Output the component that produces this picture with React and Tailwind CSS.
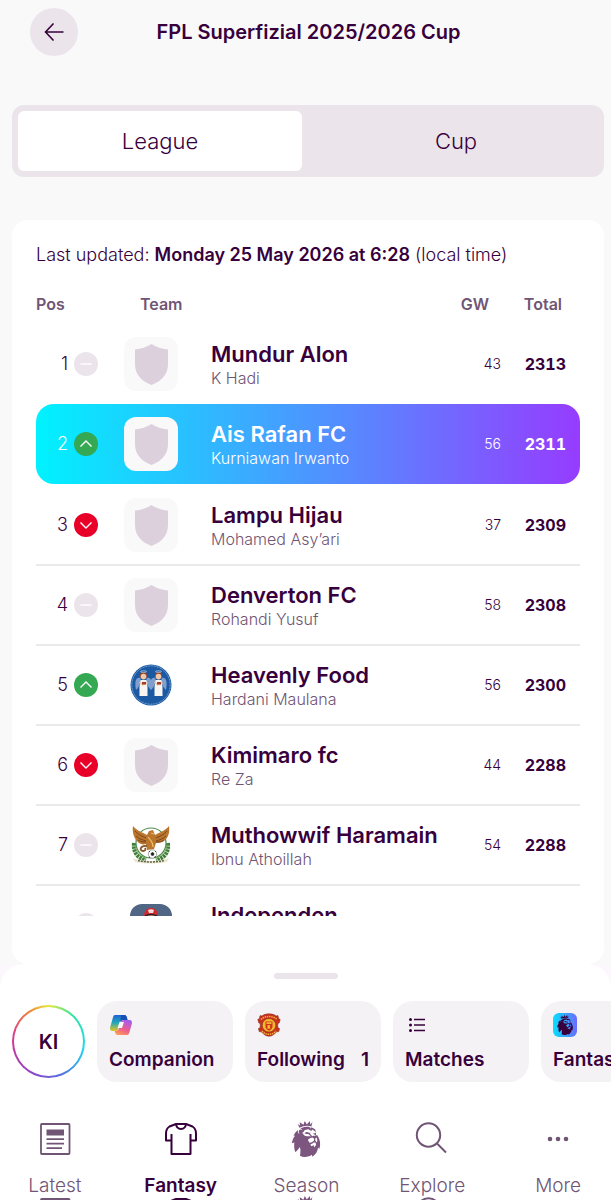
import { SiPremierleague } from 'react-icons/si';

const STANDINGS = [
  { pos: 1, move: 'same', team: 'Mundur Alon', manager: 'K Hadi', gw: 43, total: 2313 },
  { pos: 2, move: 'up', team: 'Ais Rafan FC', manager: 'Kurniawan Irwanto', gw: 56, total: 2311, mine: true },
  { pos: 3, move: 'down', team: 'Lampu Hijau', manager: 'Mohamed Asy’ari', gw: 37, total: 2309 },
  { pos: 4, move: 'same', team: 'Denverton FC', manager: 'Rohandi Yusuf', gw: 58, total: 2308 },
  { pos: 5, move: 'up', team: 'Heavenly Food', manager: 'Hardani Maulana', gw: 56, total: 2300, badge: 'angels' },
  { pos: 6, move: 'down', team: 'Kimimaro fc', manager: 'Re Za', gw: 44, total: 2288 },
  { pos: 7, move: 'same', team: 'Muthowwif Haramain', manager: 'Ibnu Athoillah', gw: 54, total: 2288, badge: 'garuda' },
  { pos: 8, move: 'same', team: 'Independen', badge: 'captain' },
];

const COLS = 'grid grid-cols-[88px_87px_1fr_48px_65px] pr-3.5';

const MOVES = {
  same: { bg: 'bg-[#ebe5eb]', d: 'M6.5 12h11', label: 'No change' },
  up: { bg: 'bg-[#34a853]', d: 'M6.5 14.5 12 9l5.5 5.5', label: 'Up' },
  down: { bg: 'bg-[#e90029]', d: 'M6.5 9.5 12 15l5.5-5.5', label: 'Down' },
};

function Move({ type }) {
  const { bg, d, label } = MOVES[type];
  return (
    <span className={`size-6 shrink-0 rounded-full ${bg}`}>
      <svg viewBox="0 0 24 24" className="size-6" fill="none" stroke="#fff" strokeWidth="1.4" aria-label={label}>
        <path d={d} />
      </svg>
    </span>
  );
}

function ShieldBadge() {
  return (
    <span className="flex size-[54px] items-center justify-center rounded-xl bg-[#f9f9f9]">
      <svg viewBox="0 0 33 41" className="h-[41px] w-[33px]">
        <path d="M16.5 0C21 3 27 5 33 5.500V20c0 10-6 17-16.500 21C6 37 0 30 0 20V5.500C6 5 12 3 16.500 0Z" fill="#dcd0dc" />
      </svg>
    </span>
  );
}

function Angel({ x }) {
  return (
    <g transform={`translate(${x} 0)`}>
      <path d="M-3 14c-5-1-6 4-4.500 12 2-2 3.500-4 4.500-8ZM3 14c5-1 6 4 4.500 12-2-2-3.500-4-4.500-8Z" fill="#7f9fcc" />
      <path d="M-3 16h6l1 7v9h-8v-9Z" fill="#f7f5f2" />
      <circle cx="0" cy="11.500" r="3.600" fill="#8f452c" />
      <circle cx="0" cy="12.600" r="2.800" fill="#f2c9a8" />
      <ellipse cx="0" cy="7.600" rx="3" ry=".8" fill="none" stroke="#c9d5e6" strokeWidth=".7" />
      <path d="M-4 18l3 3 5-2" fill="none" stroke="#efc6a5" strokeWidth="1.400" />
      <path d="M-1.500 18h4v2.500h-4z" fill="#a63d2a" />
    </g>
  );
}

function AngelsBadge() {
  return (
    <svg viewBox="0 0 42 42" className="size-[42px]">
      <circle cx="21" cy="21" r="20.500" fill="#1b5aa3" />
      <circle cx="21" cy="21" r="19.200" fill="none" stroke="#8fb3dc" strokeWidth="1" strokeDasharray="1 .6" />
      <path d="M20 17l2.500 6M22 17l-2.500 6" stroke="#b9cbe2" strokeWidth="1" />
      <Angel x={13.5} />
      <Angel x={28.5} />
    </svg>
  );
}

function GarudaBadge() {
  return (
    <svg viewBox="0 0 42 42" className="size-[42px]">
      <circle cx="21" cy="19" r="15" fill="#fff" stroke="#4f8a4e" strokeWidth="1.200" />
      <path d="M4 19c-1 9 3 15 12 17M38 19c1 9-3 15-12 17" stroke="#3f7f37" strokeWidth="4" fill="none" strokeDasharray="2.500 .7" />
      <path d="M5 21c1 7 5 11 11 13M37 21c-1 7-5 11-11 13" stroke="#74a557" strokeWidth="1" fill="none" />
      <path d="M3 2c4 5 9 6 14 9l2-4 4-1 2 5c5-3 10-4 14-9 1 7-1 12-5 15-3 2-6 2-8 2l-2 6-7 1-1-6c-3 1-7 0-9-3C4 14 2 8 3 2Z" fill="#b9762c" />
      <path d="M5 7c3 4 7 5 11 7M6 12c3 3 7 4 10 5M8 16c3 2 5 2 8 2M37 7c-3 4-7 5-11 7M36 12c-3 3-7 4-10 5M34 16c-3 2-5 2-8 2" stroke="#74421b" strokeWidth=".9" fill="none" />
      <path d="M18 13c2 3 5 4 5 10M21 9l3 1" stroke="#efbd67" strokeWidth="1.200" fill="none" />
      <path d="M17 22c-7-1-8 5-4 5 2 0 3-1 2-3" stroke="#8c5525" strokeWidth="1.800" fill="none" />
      <circle cx="22.500" cy="30" r="4.200" fill="#fff" stroke="#777" strokeWidth=".6" />
      <path d="m22.500 28.500 1.500 1-.6 1.800h-1.800l-.6-1.800ZM19 28l1-1M25 27l1 1M19 33l1 .5M24 33.500l2-1" fill="#222" stroke="#222" strokeWidth=".8" />
      <path d="M3 34c9 4 27 4 36 0l-2 4c-9 2-23 2-32 0Z" fill="#eee7cf" />
      <path d="M8 36.500c8 2 18 2 26 0" stroke="#59654b" strokeWidth="1.500" strokeDasharray="2 1" fill="none" />
    </svg>
  );
}

function CaptainBadge() {
  return (
    <svg viewBox="0 0 42 42" className="size-[42px]">
      <rect width="42" height="42" rx="12" fill="#4f6684" />
      <path d="M12 42c0-12 4-18 9-18s9 6 9 18Z" fill="#22304a" />
      <circle cx="21" cy="15" r="7" fill="#d9a184" />
      <path d="M14 12c0-11 14-11 14 0-4-2-10-2-14 0Z" fill="#cf2b2e" />
      <path d="M18 6c2-1 4-1 6 0l-1 3h-4Z" fill="#f3dcdc" />
      <path d="M15 12c4-2 8-2 12 0" stroke="#2a1c25" strokeWidth="1.500" fill="none" />
    </svg>
  );
}

const BADGES = { angels: AngelsBadge, garuda: GarudaBadge, captain: CaptainBadge };

function StandingRow({ pos, move, team, manager, gw, total, badge, mine }) {
  const Badge = BADGES[badge] || ShieldBadge;
  const tone = mine
    ? 'mb-0.5 rounded-[18px] bg-linear-to-r/srgb from-[#00f2ff] to-[#963cff] text-white'
    : pos === 1
      ? 'text-[#37003c]'
      : 'border-b-2 border-[#ebe9eb] text-[#37003c]';
  return (
    <tr className={`${COLS} h-20 items-center ${tone}`}>
      <td className="flex items-center gap-1.5">
        <span className="w-8 text-right text-lg font-light">{pos}</span>
        <Move type={move} />
      </td>
      <td className="flex w-[54px] justify-center">
        <Badge />
      </td>
      <td className="min-w-0 whitespace-nowrap">
        <p className="text-[22px] leading-7 font-semibold">{team}</p>
        <p className={`h-5 text-base leading-5 font-light ${mine ? '' : 'text-[#705574]'}`}>{manager}</p>
      </td>
      <td className="text-right text-sm font-light">{gw}</td>
      <td className="text-right text-base font-bold tabular-nums">{total}</td>
    </tr>
  );
}

function CopilotLogo() {
  return (
    <svg viewBox="0 0 24 24" className="size-6">
      <defs>
        <linearGradient id="cpA" x1="0" y1="0" x2="0" y2="1">
          <stop offset="0" stopColor="#1b62d6" />
          <stop offset=".5" stopColor="#27a8b8" />
          <stop offset="1" stopColor="#e6c61c" />
        </linearGradient>
        <linearGradient id="cpB" x1=".7" y1="0" x2=".3" y2="1">
          <stop offset="0" stopColor="#a35cf0" />
          <stop offset=".6" stopColor="#ee5d8c" />
          <stop offset="1" stopColor="#fb9a5b" />
        </linearGradient>
      </defs>
      <path d="M6 2h9c2 0 2.500 1 3 3l.5 2h-4c-2 0-3 1-3.500 3l-1.500 5c-.5 2-1.500 3-3 3H4c-3 0-3.500-2-2.500-5l2-7C4.200 3.500 4.500 2 6 2Z" fill="url(#cpA)" />
      <path d="M12 2h3c2 0 2.500 1 3 3l.5 2h-4c-2 0-2.500 1-3 2Z" fill="#1a4fb5" />
      <path d="M18 22H9c-2 0-2.500-1-3-3l-.2-1c3 0 3.700-1 4.200-3l1.500-5c.5-2 1.500-3 3.500-3h5c3 0 3.500 2 2.500 5l-2 7c-.7 2-1 3-2.500 3Z" fill="url(#cpB)" />
      <path d="M10.500 9h4.500l-2 6H8.500Z" fill="#f7f4fa" />
    </svg>
  );
}

function UnitedCrest() {
  return (
    <svg viewBox="0 0 24 24" className="size-6">
      <path
        d="M12 .8c3 0 5.500.8 7 2.200l2-.4.600 3 1.600.8-1 3.600-1.400.6v4l1.800 1-.8 3-2.600.4C17.500 21.500 15 23.200 12 23.200S6.500 21.500 4.800 19l-2.600-.4-.8-3 1.800-1v-4L1.800 10l-1-3.600 1.600-.8.600-3 2 .4C6.500 1.600 9 .8 12 .8Z"
        fill="#c9301f"
        stroke="#7d2a14"
        strokeWidth=".5"
      />
      <path d="M4 6.500C7.500 2.500 16.500 2.500 20 6.500M5 18c3.500 4.500 10.500 4.500 14 0" stroke="#f3b63c" strokeWidth="1.500" strokeDasharray="1.400 .8" fill="none" />
      <circle cx="12" cy="12.300" r="6.800" fill="#f3b72c" stroke="#7d2a14" strokeWidth=".6" />
      <path d="M8.500 8.500h7v4.500c0 2.500-1.500 3.700-3.500 4.700-2-1-3.500-2.200-3.500-4.700Z" fill="#d0321f" />
      <path d="M9.500 9.300h5v1.600h-5z" fill="#f3c33c" />
      <path d="M10.500 12c2 0 1 .6 3 0l-.8 1.800 1 2.200-1.500-.8-1.600 1Z" fill="#f6c32c" />
    </svg>
  );
}

function ListIcon() {
  return (
    <svg viewBox="0 0 24 24" className="size-6" stroke="#37003c" strokeWidth="1.600">
      <path d="M9 6.500h11M9 12h11M9 17.500h11" />
      <path d="M5.500 6.500h.01M5.500 12h.01M5.500 17.500h.01" strokeWidth="3" strokeLinecap="round" />
    </svg>
  );
}

function FantasyIcon() {
  return (
    <span className="flex size-6 items-center justify-center rounded-md bg-linear-to-r/srgb from-[#05e0ff] to-[#6a6cff]">
      <SiPremierleague className="size-5 text-[#37003c]" />
    </span>
  );
}

const SHORTCUTS = [
  { label: 'Companion', Icon: CopilotLogo },
  { label: 'Following', Icon: UnitedCrest, count: 1 },
  { label: 'Matches', Icon: ListIcon },
  { label: 'Fantasy', Icon: FantasyIcon },
];

function LatestIcon() {
  return (
    <svg viewBox="0 0 36 36" className="size-9" fill="none" stroke="currentColor" strokeWidth="1.800">
      <rect x="4" y="3" width="28.500" height="30" rx=".8" />
      <path d="M9.500 8.500h17.500v6H9.500z" fill="currentColor" stroke="none" />
      <path d="M9.500 18.200H27M9.500 22.700H27M9.500 27.200H25" />
    </svg>
  );
}

function ShirtIcon() {
  return (
    <svg viewBox="0 0 36 36" className="size-9" fill="none" stroke="currentColor" strokeWidth="2" strokeLinejoin="round">
      <path d="M13 3h10l6.500 2.500c2.500 1.500 3.500 4 3.500 7v7h-5.500V33h-19V19.500H3v-7c0-3 1-5.500 3.500-7ZM8.500 13v7M27.500 13v7M13 3c.8 6.500 9.200 6.500 10 0" />
    </svg>
  );
}

function SearchIcon() {
  return (
    <svg viewBox="0 0 36 36" className="size-9" fill="none" stroke="currentColor" strokeWidth="2">
      <circle cx="14.500" cy="14" r="11.700" />
      <path d="m23 22.500 9 9" />
    </svg>
  );
}

function MoreIcon() {
  return (
    <svg viewBox="0 0 36 36" className="size-9" fill="currentColor">
      <circle cx="10" cy="18" r="2.300" />
      <circle cx="18" cy="18" r="2.300" />
      <circle cx="26" cy="18" r="2.300" />
    </svg>
  );
}

function LionIcon() {
  return <SiPremierleague className="size-9 text-[#7d5680]" />;
}

const NAV = [
  { label: 'Latest', Icon: LatestIcon },
  { label: 'Fantasy', Icon: ShirtIcon, active: true },
  { label: 'Season', Icon: LionIcon },
  { label: 'Explore', Icon: SearchIcon },
  { label: 'More', Icon: MoreIcon },
];

export default function App() {
  return (
    <div className="flex h-screen flex-col overflow-hidden bg-[#f9f9f9] font-['Inter',sans-serif] text-[#37003c]">
      <header className="mt-2 grid h-12 shrink-0 grid-cols-[48px_1fr_48px] items-center pr-6 pl-[30px]">
        <button aria-label="Back" className="flex size-12 items-center justify-center rounded-full bg-[#ebe5eb]">
          <svg viewBox="0 0 24 24" className="size-6" fill="none" stroke="currentColor" strokeWidth="1.600">
            <path d="M21.500 12H3.500M11.500 3.500 3.500 12l8 8.500" />
          </svg>
        </button>
        <h1 className="text-center text-xl font-semibold whitespace-nowrap">FPL Superfizial 2025/2026 Cup</h1>
      </header>

      <div className="mt-[49px] mr-[7px] ml-3 grid h-[72px] shrink-0 grid-cols-2 rounded-xl bg-[#ebe5eb] text-[22px] font-light">
        <button className="m-1.5 rounded-md bg-white">League</button>
        <button>Cup</button>
      </div>

      <main className="mt-[43px] mr-[7px] ml-3 flex min-h-0 flex-1 flex-col rounded-2xl bg-white px-6 pb-12">
        <p className="mt-[21px] text-lg leading-7 font-light whitespace-nowrap">
          Last updated: <strong className="font-semibold">Monday 25 May 2026 at 6:28</strong> (local time)
        </p>
        <div className="mt-6 min-h-0 flex-1 overflow-hidden">
          <table className="block w-full">
            <thead className="block">
              <tr className={`${COLS} mb-[9px] text-base leading-[22px] text-[#705574]`}>
                <th className="text-left font-semibold">Pos</th>
                <th className="pl-4 text-left font-semibold">Team</th>
                <th />
                <th className="pr-3 text-right font-semibold">GW</th>
                <th className="pr-1 text-right font-semibold">Total</th>
              </tr>
            </thead>
            <tbody className="block">
              {STANDINGS.map((row) => (
                <StandingRow key={row.pos} {...row} />
              ))}
            </tbody>
          </table>
        </div>
      </main>

      {/* Bottom sheet */}
      <div className="h-[236px] shrink-0 bg-[#fbf7fc]">
        <div className="h-full overflow-hidden rounded-t-3xl bg-white pt-[9px]">
          <div className="mx-auto h-1.5 w-16 rounded-full bg-[#ebe5eb]" />

          <div className="mt-[22px] flex items-center gap-3 overflow-hidden pl-3">
            <a
              href="#profile"
              className="size-[73px] shrink-0 rounded-full bg-[conic-gradient(#e6e83a,#2be3a0_12%,#1fd8ee_28%,#5a6de0_45%,#9a3fc0_60%,#d93b8c_78%,#ef7a3c_90%,#e6e83a)] p-0.5"
            >
              <span className="flex size-full items-center justify-center rounded-full bg-white text-xl font-semibold">KI</span>
            </a>
            {SHORTCUTS.map(({ label, Icon, count }) => (
              <button
                key={label}
                className="flex h-[81px] w-[136px] shrink-0 flex-col justify-between rounded-[20px] bg-[#f4f2f5] px-3 pt-3 pb-2 text-left"
              >
                <Icon />
                <span className="flex w-full justify-between text-[19px] leading-7 font-semibold">
                  {label}
                  {count && <span>{count}</span>}
                </span>
              </button>
            ))}
          </div>

          <nav className="mt-[39px] -mr-2.5 -ml-2 grid grid-cols-5">
            {NAV.map(({ label, Icon, active }) => (
              <a
                key={label}
                href={`#${label.toLowerCase()}`}
                className={`flex flex-col items-center text-[19px] leading-5 ${active ? 'font-semibold' : 'font-light text-[#705574]'}`}
              >
                <Icon />
                <span className="mt-[19px]">{label}</span>
                <span aria-hidden="true">
                  <Icon />
                </span>
              </a>
            ))}
          </nav>
        </div>
      </div>
    </div>
  );
}
